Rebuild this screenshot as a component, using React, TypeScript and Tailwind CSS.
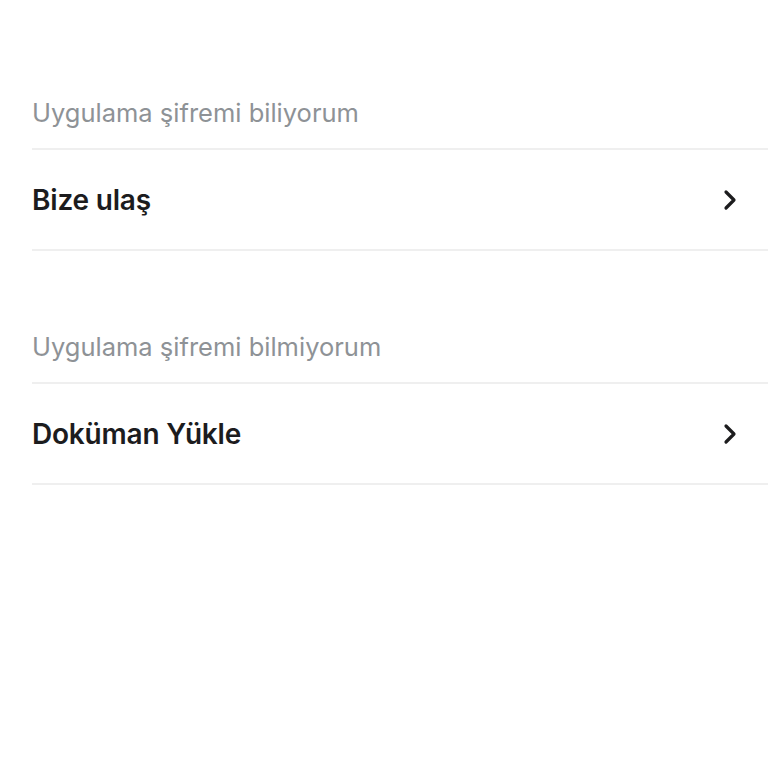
import React from "react";

function Chevron() {
  return (
    <svg width="14" height="22" viewBox="0 0 14 22" fill="none" className="shrink-0">
      <path
        d="M3 3l8 8-8 8"
        stroke="#1c1c1e"
        strokeWidth="3.2"
        strokeLinecap="round"
        strokeLinejoin="round"
      />
    </svg>
  );
}

function Section({ label, item }: { label: string; item: string }) {
  return (
    <section>
      <p className="pb-[19px] pl-8 text-[25.5px] leading-8 text-[#8e9296]">
        {label}
      </p>
      <div className="ml-8 border-t-2 border-[#efefef]">
        <button
          type="button"
          className="flex h-[101px] w-full items-center justify-between border-b-2 border-[#efefef] pr-[31px] text-left"
        >
          <span className="text-[28px] font-semibold tracking-[-0.2px] text-[#1c1c1e]">
            {item}
          </span>
          <Chevron />
        </button>
      </div>
    </section>
  );
}

export default function App() {
  return (
    <div
      className="min-h-[768px] w-full bg-white pt-[97px]"
      style={{ fontFamily: "Inter, 'Noto Sans', sans-serif" }}
    >
      <div className="flex flex-col gap-[80px]">
        <Section label="Uygulama şifremi biliyorum" item="Bize ulaş" />
        <Section label="Uygulama şifremi bilmiyorum" item="Doküman Yükle" />
      </div>
    </div>
  );
}
